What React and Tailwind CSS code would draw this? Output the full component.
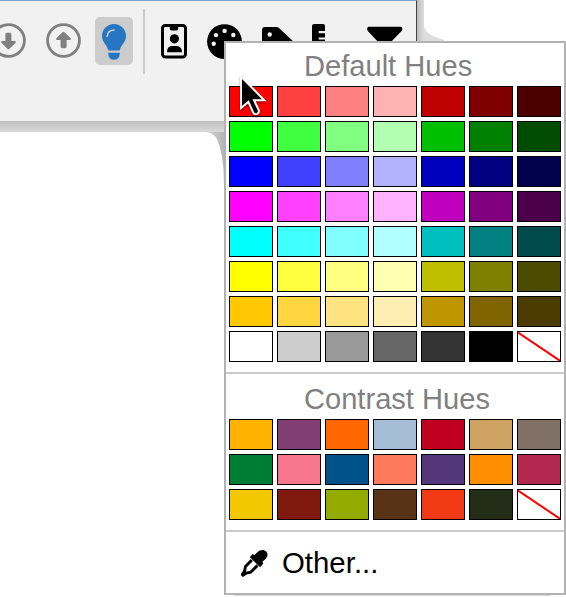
import React from "react";

const defaultHues = [
  "#ff0000", "#ff4040", "#ff8080", "#ffb2b2", "#bf0000", "#800000", "#4c0000",
  "#00ff00", "#40ff40", "#80ff80", "#b2ffb2", "#00bf00", "#008000", "#004c00",
  "#0000ff", "#4040ff", "#8080ff", "#b2b2ff", "#0000bf", "#000080", "#00004c",
  "#ff00ff", "#ff40ff", "#ff80ff", "#ffb2ff", "#bf00bf", "#800080", "#4c004c",
  "#00ffff", "#40ffff", "#80ffff", "#b2ffff", "#00bfbf", "#008080", "#004c4c",
  "#ffff00", "#ffff40", "#ffff80", "#ffffb2", "#bfbf00", "#808000", "#4c4c00",
  "#ffc800", "#ffd640", "#ffe380", "#ffeeb2", "#bf9600", "#806400", "#4c3c00",
  "#ffffff", "#cccccc", "#999999", "#666666", "#333333", "#000000", null,
];

const contrastHues = [
  "#ffb300", "#803e75", "#ff6800", "#a6bdd7", "#c10020", "#cea262", "#817066",
  "#007d34", "#f6768e", "#00538a", "#ff7a5c", "#53377a", "#ff8e00", "#b32851",
  "#f4c800", "#7f180d", "#93aa00", "#593315", "#f13a13", "#232c16", null,
];

function Swatches({ colors }) {
  return (
    <div className="ml-[3px] grid w-[332px] grid-cols-7 gap-1">
      {colors.map((color, i) => (
        <div key={i} className="h-[31px] border border-black" style={{ backgroundColor: color || "#fff" }}>
          {!color && (
            <svg className="block h-full w-full" viewBox="0 0 42 29">
              <path d="M0 .5 42 28.8" stroke="#ff0000" strokeWidth="2" />
            </svg>
          )}
        </div>
      ))}
    </div>
  );
}

function Arrow({ up }) {
  return (
    <svg className="h-[35px] w-[35px] shrink-0" viewBox="0 0 36 36">
      <circle cx="18" cy="18" r="16.4" fill="none" stroke="#808080" strokeWidth="2.9" />
      <path
        transform={up ? undefined : "rotate(180 18 18)"}
        d="M17.2 9.2Q18 8.6 18.8 9.2L25.4 15.7Q26.2 17.4 24.5 17.4H21.2V24.5Q21.2 26 19.7 26H16.5Q15 26 15 24.5V17.4H11.5Q9.8 17.4 10.6 15.7Z"
        fill="#808080"
      />
    </svg>
  );
}

function Bulb() {
  return (
    <svg className="mt-[1px] h-[36px] w-[24px]" viewBox="0 0 24 36">
      <path d="M12 0A12 12 0 0 1 24 12C24 18.5 19 20.5 17.6 26.5H6.4C5 20.5 0 18.5 0 12A12 12 0 0 1 12 0ZM6.3 28.7H17.7V30.5Q17 35.8 12 35.8T6.3 30.5Z" fill="#2676c2" />
      <path d="M5.2 12.2Q5.5 6.6 12 6" fill="none" stroke="#cccccc" strokeWidth="1.7" strokeLinecap="round" />
    </svg>
  );
}

function Badge() {
  return (
    <svg className="h-[35px] w-[26px] shrink-0" viewBox="0 0 26 35">
      <rect x="1.5" y="1.5" width="23" height="31.5" rx="2.7" fill="none" stroke="#000" strokeWidth="3" />
      <path d="M8.8 2H17.2V4.8Q17.2 6.6 15.5 6.6H10.5Q8.8 6.6 8.8 4.8ZM6 28.2Q6 22 11 22H15.5Q21 22.2 21 28.2Z" />
      <circle cx="13.4" cy="14.8" r="4.6" />
    </svg>
  );
}

function Palette() {
  return (
    <svg className="h-[35px] w-[35px] shrink-0" viewBox="0 0 35 35">
      <circle cx="17.5" cy="17.6" r="17.4" />
      <g fill="#f1f1f1">
        <circle cx="9" cy="11.1" r="2.2" />
        <circle cx="17.6" cy="6.9" r="2.2" />
        <circle cx="26.3" cy="11" r="2.2" />
        <circle cx="6.7" cy="19.8" r="2.2" />
      </g>
    </svg>
  );
}

function Tag() {
  return (
    <svg className="h-[36px] w-[36px] shrink-0" viewBox="0 0 36 36">
      <path d="M3 3H14.2Q16 3 17.3 4.2L34 20V32H18L0 17V6Q0 3 3 3Z" />
      <circle cx="7.7" cy="10.5" r="2.2" fill="#f1f1f1" />
    </svg>
  );
}

function Ruler() {
  return (
    <svg className="h-[36px] w-[13px] shrink-0" viewBox="0 0 13 36">
      <path d="M2.2 0H11Q13 0 13 2V7H6.7V9.3H13V13.6H6.7V15.6H13V36H0V2.2Q0 0 2.2 0Z" />
    </svg>
  );
}

function Filter() {
  return (
    <svg className="h-[36px] w-[36px] shrink-0" viewBox="0 0 36 36">
      <path d="M1.5 2.8H34Q36.3 4 34.6 7L21 21V34L14 28V21L.8 7Q-.8 4 1.5 2.8Z" />
    </svg>
  );
}

function Shadows() {
  return (
    <svg className="absolute inset-0 h-[597px] w-[566px]" viewBox="0 0 566 597">
      <defs>
        <linearGradient id="below" x1="0" y1="0" x2="0" y2="1">
          <stop stopColor="#bebebe" />
          <stop offset="1" stopColor="#dadada" />
        </linearGradient>
        <linearGradient id="beside">
          <stop stopColor="#bcbcbc" />
          <stop offset="1" stopColor="#dddddd" />
        </linearGradient>
        <linearGradient id="corner">
          <stop stopColor="#dedede" />
          <stop offset="1" stopColor="#b4b4b4" />
        </linearGradient>
      </defs>
      <path d="M0 121H226V132H0Z" fill="url(#below)" />
      <path d="M204 132Q213 132 217 139L219.5 146 222 157 223.5 169 224 185V132Z" fill="url(#corner)" />
      <path d="M417 0H424V42H417Z" fill="url(#beside)" />
      <path d="M424 27Q426 33 433 36L444 40V42H424Z" fill="#dddddd" />
      <path d="M234 595.5H551" stroke="#dadada" />
    </svg>
  );
}

function Pointer() {
  return (
    <svg className="absolute left-[8px] top-[29px] h-[48px] w-[36px] drop-shadow-[0_2px_1px_rgba(0,0,0,0.4)]" viewBox="0 0 36 48">
      <path
        d="M7 4.5V36L14.4 29.8 19 40.2Q20.7 43 23.2 41.9 25.7 40.5 24.7 38L20 28.2H30.3Z"
        stroke="#fff"
        strokeWidth="2"
      />
    </svg>
  );
}

function Menu() {
  return (
    <div className="relative mt-[41px] flex h-[554px] w-[342px] flex-col border-2 border-[#b2b2b2] bg-white">
      <h2 className="h-[43px] pl-[78px] pt-[1px] text-[29.1px] leading-[44px] text-[#808080]">Default Hues</h2>
      <Swatches colors={defaultHues} />
      <hr className="mt-[10px] border-t-2 border-[#cccccc]" />
      <h2 className="h-[45px] pl-[78px] pt-[3px] text-[29.1px] leading-[44px] text-[#808080]">Contrast Hues</h2>
      <Swatches colors={contrastHues} />
      <hr className="mt-[10px] border-t-2 border-[#cccccc]" />
      <div className="flex h-[61px] items-center pl-[15px]">
        <svg className="mt-[2px] h-[27px] w-[27px]" viewBox="0 0 27 27">
          <path d="M15 3.5Q18.5-.4 22.3.1 27.4 1.4 26.3 6.2 25.3 9 21.3 11.8L22.3 13.5 19.2 17.3 8.8 7 11.8 4 13.5 5.3Z" />
          <path d="M10.9 9.9 4.5 16.5 3.6 21.2 1.3 24.4 2.1 25.2 5.4 23 9.7 22.2 16.5 15.4" fill="none" stroke="#000" strokeWidth="2.9" />
        </svg>
        <span className="ml-[14px] text-[29.4px] leading-[44px]">Other...</span>
      </div>
      <Pointer />
    </div>
  );
}

export default function App() {
  return (
    <div className="relative h-[597px] w-[566px] overflow-hidden bg-white font-['Liberation_Sans',Arial,sans-serif] text-black">
      <Shadows />
      <header className="relative flex h-[121px] w-[417px] items-start border-r border-t border-r-[#424242] border-t-[#7fa5d5] bg-[#f1f1f1]">
        <div className="-ml-[9px] mt-[22px] flex w-[90px] shrink-0 justify-between">
          <Arrow />
          <Arrow up />
        </div>
        <div className="ml-[14px] mt-[16px] flex h-[48px] w-[38px] shrink-0 items-center justify-center rounded-[5px] bg-[#cccccc]">
          <Bulb />
        </div>
        <div className="ml-[10px] mt-[8px] h-[65px] w-[2px] shrink-0 bg-[#cccccc]" />
        <div className="ml-[16px] mt-[23px] flex shrink-0 items-start">
          <Badge />
          <div className="ml-[20px]"><Palette /></div>
          <div className="ml-[20px]"><Tag /></div>
          <div className="ml-[14px]"><Ruler /></div>
          <div className="ml-[42px]"><Filter /></div>
        </div>
      </header>
      <div className="-mt-[121px] flex justify-end">
        <Menu />
      </div>
    </div>
  );
}
